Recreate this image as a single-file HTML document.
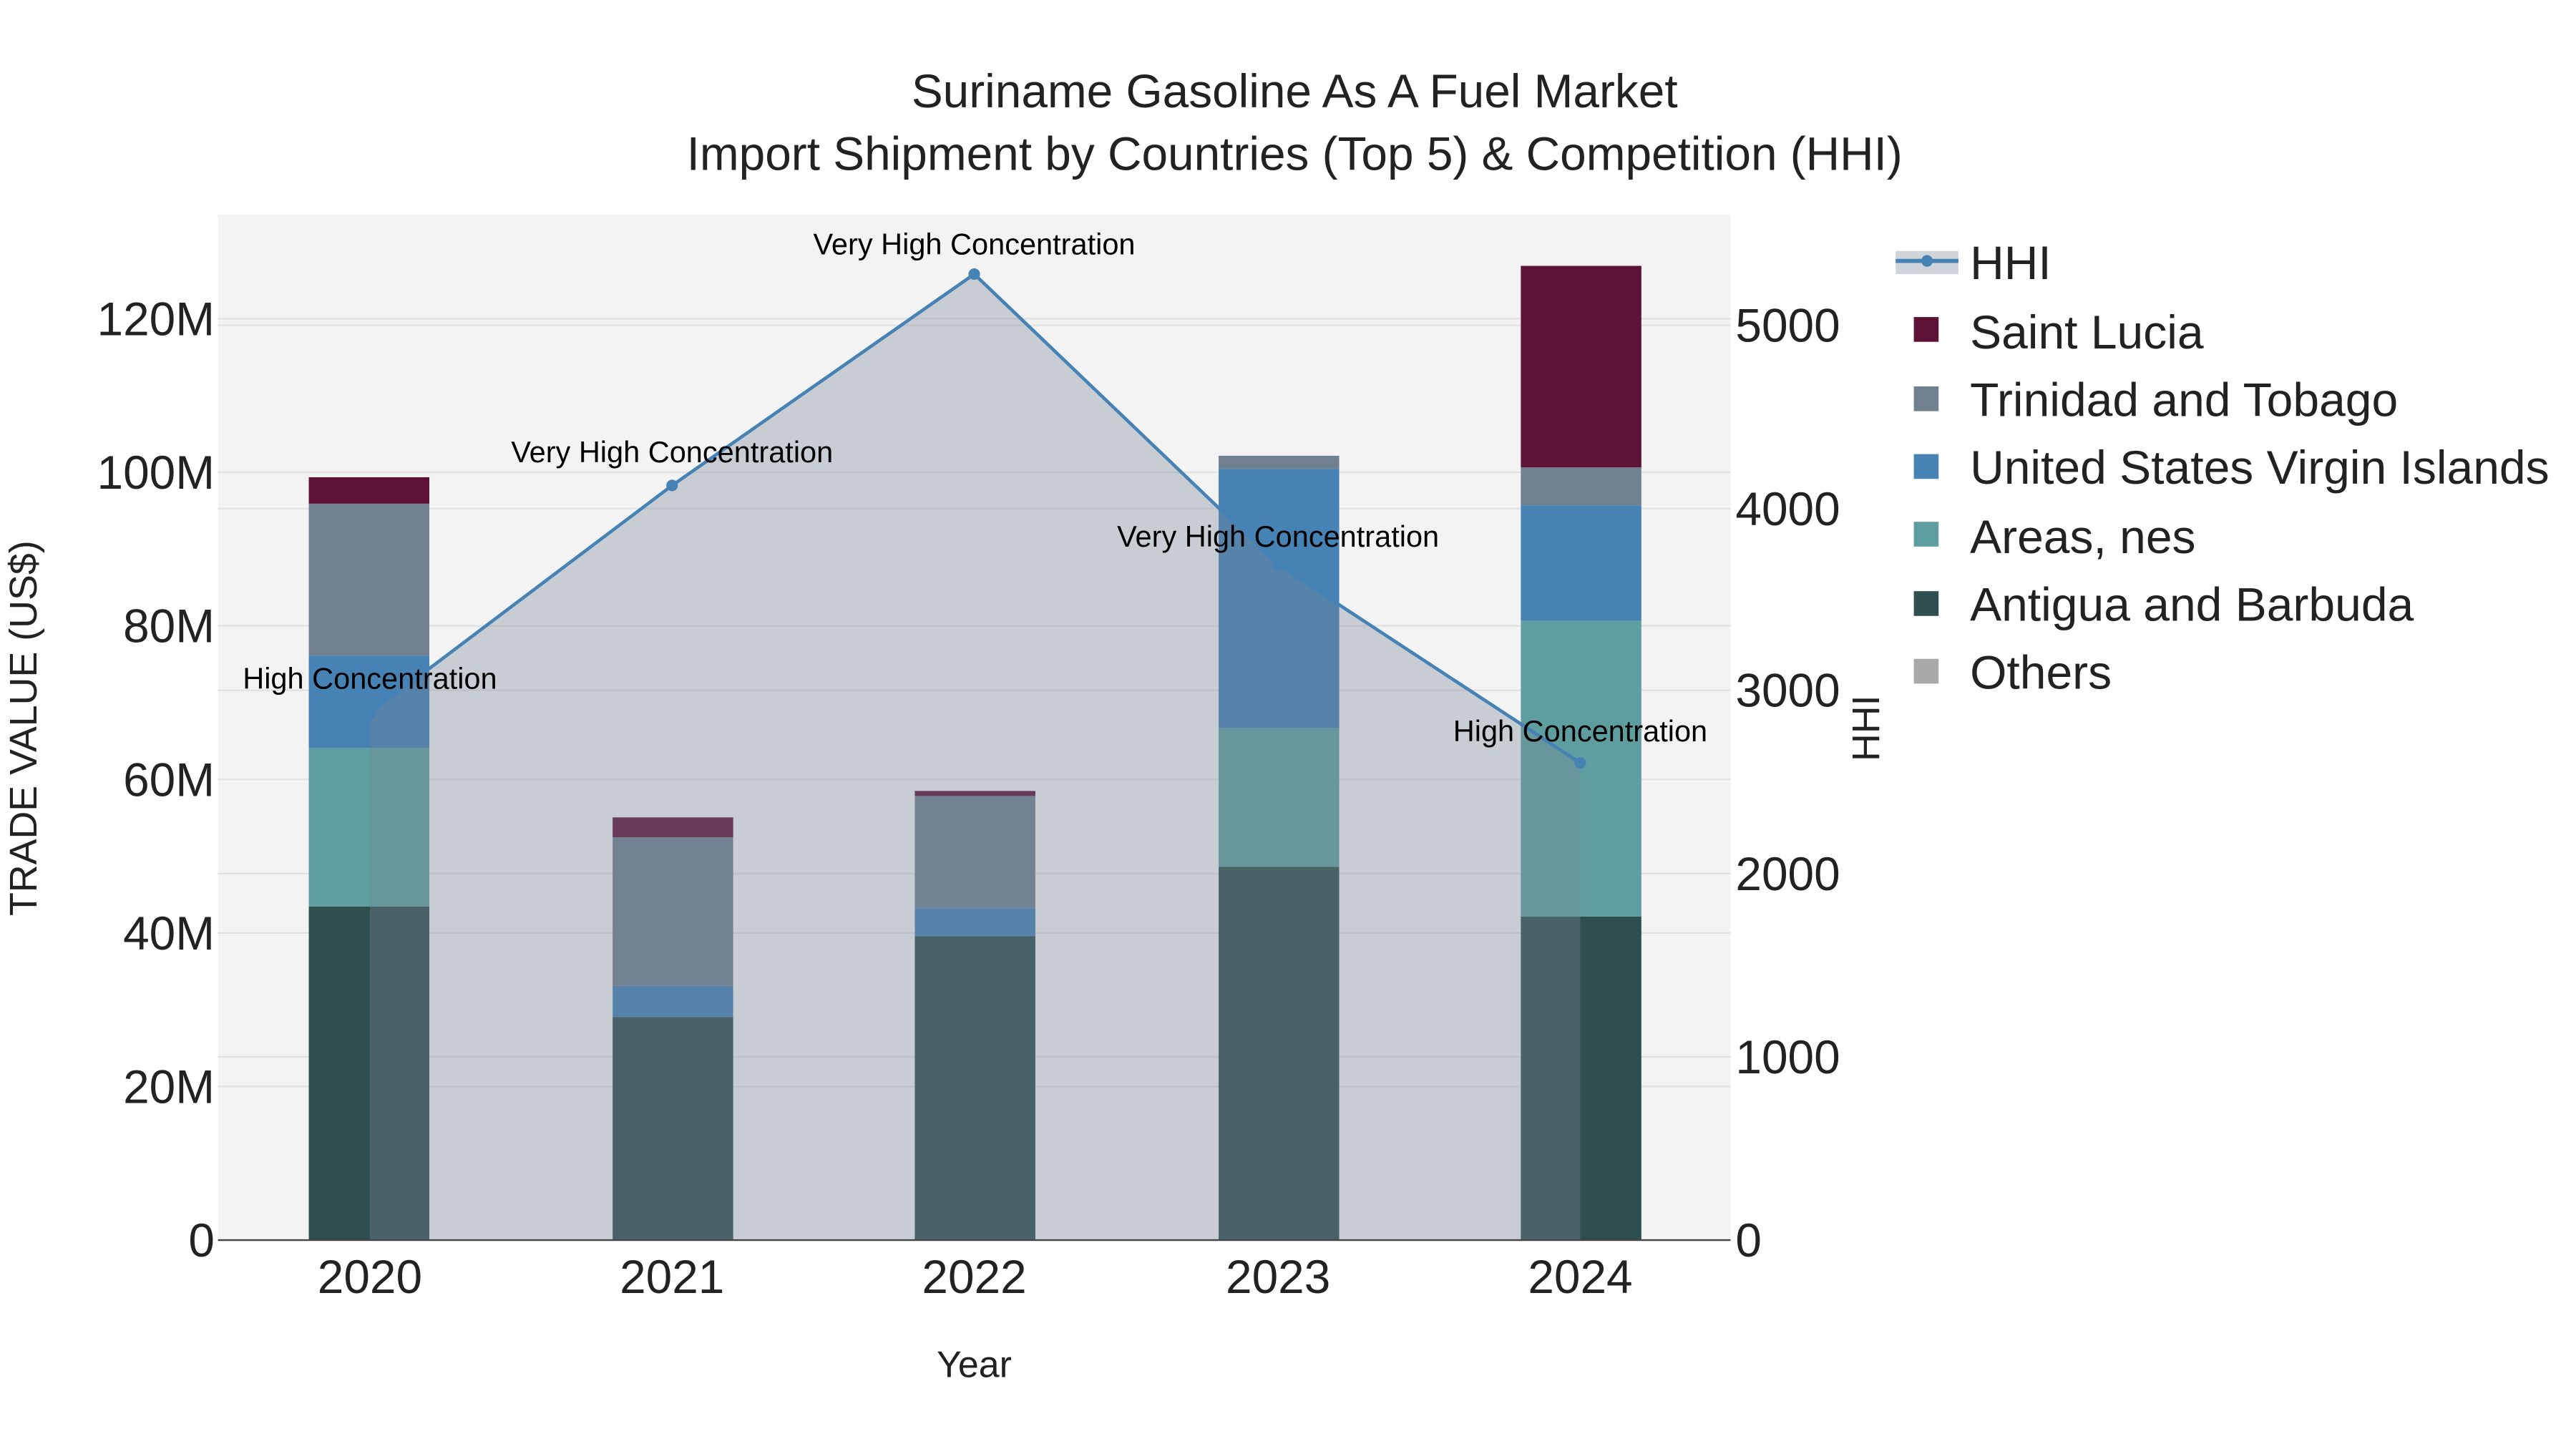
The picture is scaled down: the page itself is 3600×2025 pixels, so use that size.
<!DOCTYPE html>
<html><head><meta charset="utf-8"><style>html,body{margin:0;padding:0;background:#fff}svg{display:block}text{font-family:"Liberation Sans",sans-serif}</style></head><body>
<svg width="3600" height="2025" viewBox="0 0 1560 877.5" xmlns="http://www.w3.org/2000/svg">
<rect width="1560" height="877.5" fill="#fff"/>
<rect x="132" y="130" width="916" height="621" fill="#f3f3f3"/>
<g stroke="#e2e2e2" stroke-width="1">
<line x1="132" x2="1048" y1="658" y2="658"/><line x1="132" x2="1048" y1="565" y2="565"/><line x1="132" x2="1048" y1="472" y2="472"/><line x1="132" x2="1048" y1="379" y2="379"/><line x1="132" x2="1048" y1="286" y2="286"/><line x1="132" x2="1048" y1="193" y2="193"/>
<line x1="132" x2="1048" y1="640" y2="640"/><line x1="132" x2="1048" y1="529" y2="529"/><line x1="132" x2="1048" y1="418" y2="418"/><line x1="132" x2="1048" y1="308" y2="308"/><line x1="132" x2="1048" y1="197" y2="197"/>
</g>
<rect x="187" y="549" width="73" height="202" fill="#2f4f4f"/><rect x="187" y="453" width="73" height="96" fill="#5f9ea0"/><rect x="187" y="397" width="73" height="56" fill="#4682b4"/><rect x="187" y="305" width="73" height="92" fill="#708090"/><rect x="187" y="289" width="73" height="16" fill="#5e1235"/>
<rect x="371" y="616" width="73" height="135" fill="#2f4f4f"/><rect x="371" y="597" width="73" height="19" fill="#4682b4"/><rect x="371" y="507" width="73" height="90" fill="#708090"/><rect x="371" y="495" width="73" height="12" fill="#5e1235"/>
<rect x="554" y="567" width="73" height="184" fill="#2f4f4f"/><rect x="554" y="550" width="73" height="17" fill="#4682b4"/><rect x="554" y="482" width="73" height="68" fill="#708090"/><rect x="554" y="479" width="73" height="3" fill="#5e1235"/>
<rect x="738" y="525" width="73" height="226" fill="#2f4f4f"/><rect x="738" y="441" width="73" height="84" fill="#5f9ea0"/><rect x="738" y="284" width="73" height="157" fill="#4682b4"/><rect x="738" y="276" width="73" height="8" fill="#708090"/>
<rect x="921" y="555" width="73" height="196" fill="#2f4f4f"/><rect x="921" y="376" width="73" height="179" fill="#5f9ea0"/><rect x="921" y="306" width="73" height="70" fill="#4682b4"/><rect x="921" y="283" width="73" height="23" fill="#708090"/><rect x="921" y="161" width="73" height="122" fill="#5e1235"/>
<polygon points="224,432 407,294 590,166 774,342 957,462 957,751 224,751" fill="rgba(119,136,153,0.35)"/>
<polyline points="224,432 407,294 590,166 774,342 957,462" fill="none" stroke="#4682b4" stroke-width="2"/>
<g fill="#4682b4"><circle cx="224" cy="432" r="3.5"/><circle cx="407" cy="294" r="3.5"/><circle cx="590" cy="166" r="3.5"/><circle cx="774" cy="342" r="3.5"/><circle cx="957" cy="462" r="3.5"/></g>
<line x1="132" x2="1048" y1="751" y2="751" stroke="#444" stroke-width="1"/>
<g font-size="18" fill="#000" text-anchor="middle">
<text x="224" y="417">High Concentration</text><text x="407" y="280">Very High Concentration</text><text x="590" y="154">Very High Concentration</text><text x="774" y="331">Very High Concentration</text><text x="957" y="449">High Concentration</text>
</g>
<g font-size="28.5" fill="#222" text-anchor="end">
<text x="130" y="761">0</text><text x="130" y="668">20M</text><text x="130" y="575">40M</text><text x="130" y="482">60M</text><text x="130" y="389">80M</text><text x="130" y="296">100M</text><text x="130" y="203">120M</text>
</g>
<g font-size="28.5" fill="#222">
<text x="1051" y="761">0</text><text x="1051" y="650">1000</text><text x="1051" y="539">2000</text><text x="1051" y="428">3000</text><text x="1051" y="318">4000</text><text x="1051" y="207">5000</text>
</g>
<g font-size="28.5" fill="#222" text-anchor="middle">
<text x="224" y="783">2020</text><text x="407" y="783">2021</text><text x="590" y="783">2022</text><text x="774" y="783">2023</text><text x="957" y="783">2024</text>
</g>
<text x="590" y="834" font-size="22.5" text-anchor="middle" fill="#222">Year</text>
<text transform="translate(22,441) rotate(-90)" font-size="23.3" text-anchor="middle" fill="#222">TRADE VALUE (US$)</text>
<text transform="translate(1138,441) rotate(-90)" font-size="23.3" text-anchor="middle" fill="#222">HHI</text>
<g font-size="28.5" fill="#222" text-anchor="middle"><text x="784" y="65">Suriname Gasoline As A Fuel Market</text><text x="784" y="103">Import Shipment by Countries (Top 5) &amp; Competition (HHI)</text></g>
<rect x="1148" y="152" width="38" height="14" fill="rgba(119,136,153,0.35)"/>
<line x1="1148" x2="1186" y1="158" y2="158" stroke="#4682b4" stroke-width="2.5"/><circle cx="1167" cy="158" r="3.5" fill="#4682b4"/>
<rect x="1159" y="192" width="15" height="15" fill="#5e1235"/>
<rect x="1159" y="234" width="15" height="15" fill="#708090"/>
<rect x="1159" y="275" width="15" height="15" fill="#4682b4"/>
<rect x="1159" y="316" width="15" height="15" fill="#5f9ea0"/>
<rect x="1159" y="358" width="15" height="15" fill="#2f4f4f"/>
<rect x="1159" y="399" width="15" height="15" fill="#a9a9a9"/>
<g font-size="28.6" fill="#222">
<text x="1193" y="169">HHI</text><text x="1193" y="211">Saint Lucia</text><text x="1193" y="252">Trinidad and Tobago</text><text x="1193" y="293">United States Virgin Islands</text><text x="1193" y="335">Areas, nes</text><text x="1193" y="376">Antigua and Barbuda</text><text x="1193" y="417">Others</text>
</g>
</svg>
</body></html>
